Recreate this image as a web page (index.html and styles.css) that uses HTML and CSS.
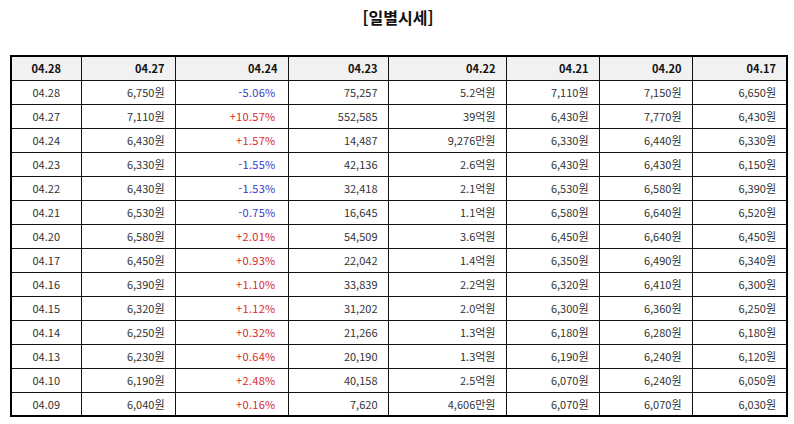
FILE: index.html
```html
<!DOCTYPE html>
<html lang="ko">
<head>
<meta charset="utf-8">
<title>일별시세</title>
<link rel="stylesheet" href="styles.css">
</head>
<body>
<div class="wrap">
  <h1 class="title">[일별시세]</h1>
  <table class="grid">
    <colgroup>
      <col class="c1"><col class="c2"><col class="c3"><col class="c4"><col class="c5"><col class="c6"><col class="c7"><col class="c8">
    </colgroup>
    <thead>
      <tr><th class="date">04.28</th><th>04.27</th><th>04.24</th><th>04.23</th><th>04.22</th><th>04.21</th><th>04.20</th><th>04.17</th></tr>
    </thead>
    <tbody>
      <tr><td class="date">04.28</td><td>6,750원</td><td class="dn">-5.06%</td><td>75,257</td><td>5.2억원</td><td>7,110원</td><td>7,150원</td><td>6,650원</td></tr>
      <tr><td class="date">04.27</td><td>7,110원</td><td class="up">+10.57%</td><td>552,585</td><td>39억원</td><td>6,430원</td><td>7,770원</td><td>6,430원</td></tr>
      <tr><td class="date">04.24</td><td>6,430원</td><td class="up">+1.57%</td><td>14,487</td><td>9,276만원</td><td>6,330원</td><td>6,440원</td><td>6,330원</td></tr>
      <tr><td class="date">04.23</td><td>6,330원</td><td class="dn">-1.55%</td><td>42,136</td><td>2.6억원</td><td>6,430원</td><td>6,430원</td><td>6,150원</td></tr>
      <tr><td class="date">04.22</td><td>6,430원</td><td class="dn">-1.53%</td><td>32,418</td><td>2.1억원</td><td>6,530원</td><td>6,580원</td><td>6,390원</td></tr>
      <tr><td class="date">04.21</td><td>6,530원</td><td class="dn">-0.75%</td><td>16,645</td><td>1.1억원</td><td>6,580원</td><td>6,640원</td><td>6,520원</td></tr>
      <tr><td class="date">04.20</td><td>6,580원</td><td class="up">+2.01%</td><td>54,509</td><td>3.6억원</td><td>6,450원</td><td>6,640원</td><td>6,450원</td></tr>
      <tr><td class="date">04.17</td><td>6,450원</td><td class="up">+0.93%</td><td>22,042</td><td>1.4억원</td><td>6,350원</td><td>6,490원</td><td>6,340원</td></tr>
      <tr><td class="date">04.16</td><td>6,390원</td><td class="up">+1.10%</td><td>33,839</td><td>2.2억원</td><td>6,320원</td><td>6,410원</td><td>6,300원</td></tr>
      <tr><td class="date">04.15</td><td>6,320원</td><td class="up">+1.12%</td><td>31,202</td><td>2.0억원</td><td>6,300원</td><td>6,360원</td><td>6,250원</td></tr>
      <tr><td class="date">04.14</td><td>6,250원</td><td class="up">+0.32%</td><td>21,266</td><td>1.3억원</td><td>6,180원</td><td>6,280원</td><td>6,180원</td></tr>
      <tr><td class="date">04.13</td><td>6,230원</td><td class="up">+0.64%</td><td>20,190</td><td>1.3억원</td><td>6,190원</td><td>6,240원</td><td>6,120원</td></tr>
      <tr><td class="date">04.10</td><td>6,190원</td><td class="up">+2.48%</td><td>40,158</td><td>2.5억원</td><td>6,070원</td><td>6,240원</td><td>6,050원</td></tr>
      <tr><td class="date">04.09</td><td>6,040원</td><td class="up">+0.16%</td><td>7,620</td><td>4,606만원</td><td>6,070원</td><td>6,070원</td><td>6,030원</td></tr>
    </tbody>
  </table>
</div>
</body>
</html>
```
FILE: styles.css
```css
html, body {
  margin: 0;
  padding: 0;
  background: #fff;
}
body {
  font-family: "Noto Sans CJK KR", "Noto Sans", sans-serif;
  color: #222;
}
.wrap {
  padding: 5px 8px 0 10px;
}
.title {
  margin: 0 0 26px 0;
  height: 24px;
  line-height: 24px;
  text-align: center;
  font-size: 16px;
  font-weight: 700;
  color: #111;
}
.grid {
  width: 776px;
  border-collapse: collapse;
  table-layout: fixed;
  border: 2px solid #000;
  font-size: 11px;
}
.c1 { width: 70px; }
.c2 { width: 94px; }
.c3 { width: 113px; }
.c4 { width: 100px; }
.c5 { width: 118px; }
.c6 { width: 93px; }
.c7 { width: 93px; }
.c8 { width: 95px; }
.grid th, .grid td {
  border: 1px solid #111;
  height: 24px;
  padding: 0 10px 0 4px;
  text-align: right;
  white-space: nowrap;
  line-height: 14px;
  box-sizing: border-box;
}
.grid th {
  background: #f1f1f1;
  font-weight: 700;
  color: #111;
}
.grid td {
  color: #333;
}
.grid .date {
  text-align: center;
  padding: 0;
}
.grid td.up {
  color: #e0262e;
  padding-right: 12px;
  letter-spacing: 0.3px;
}
.grid td.dn {
  color: #3a3ac8;
  padding-right: 12px;
  letter-spacing: 0.3px;
}
```
